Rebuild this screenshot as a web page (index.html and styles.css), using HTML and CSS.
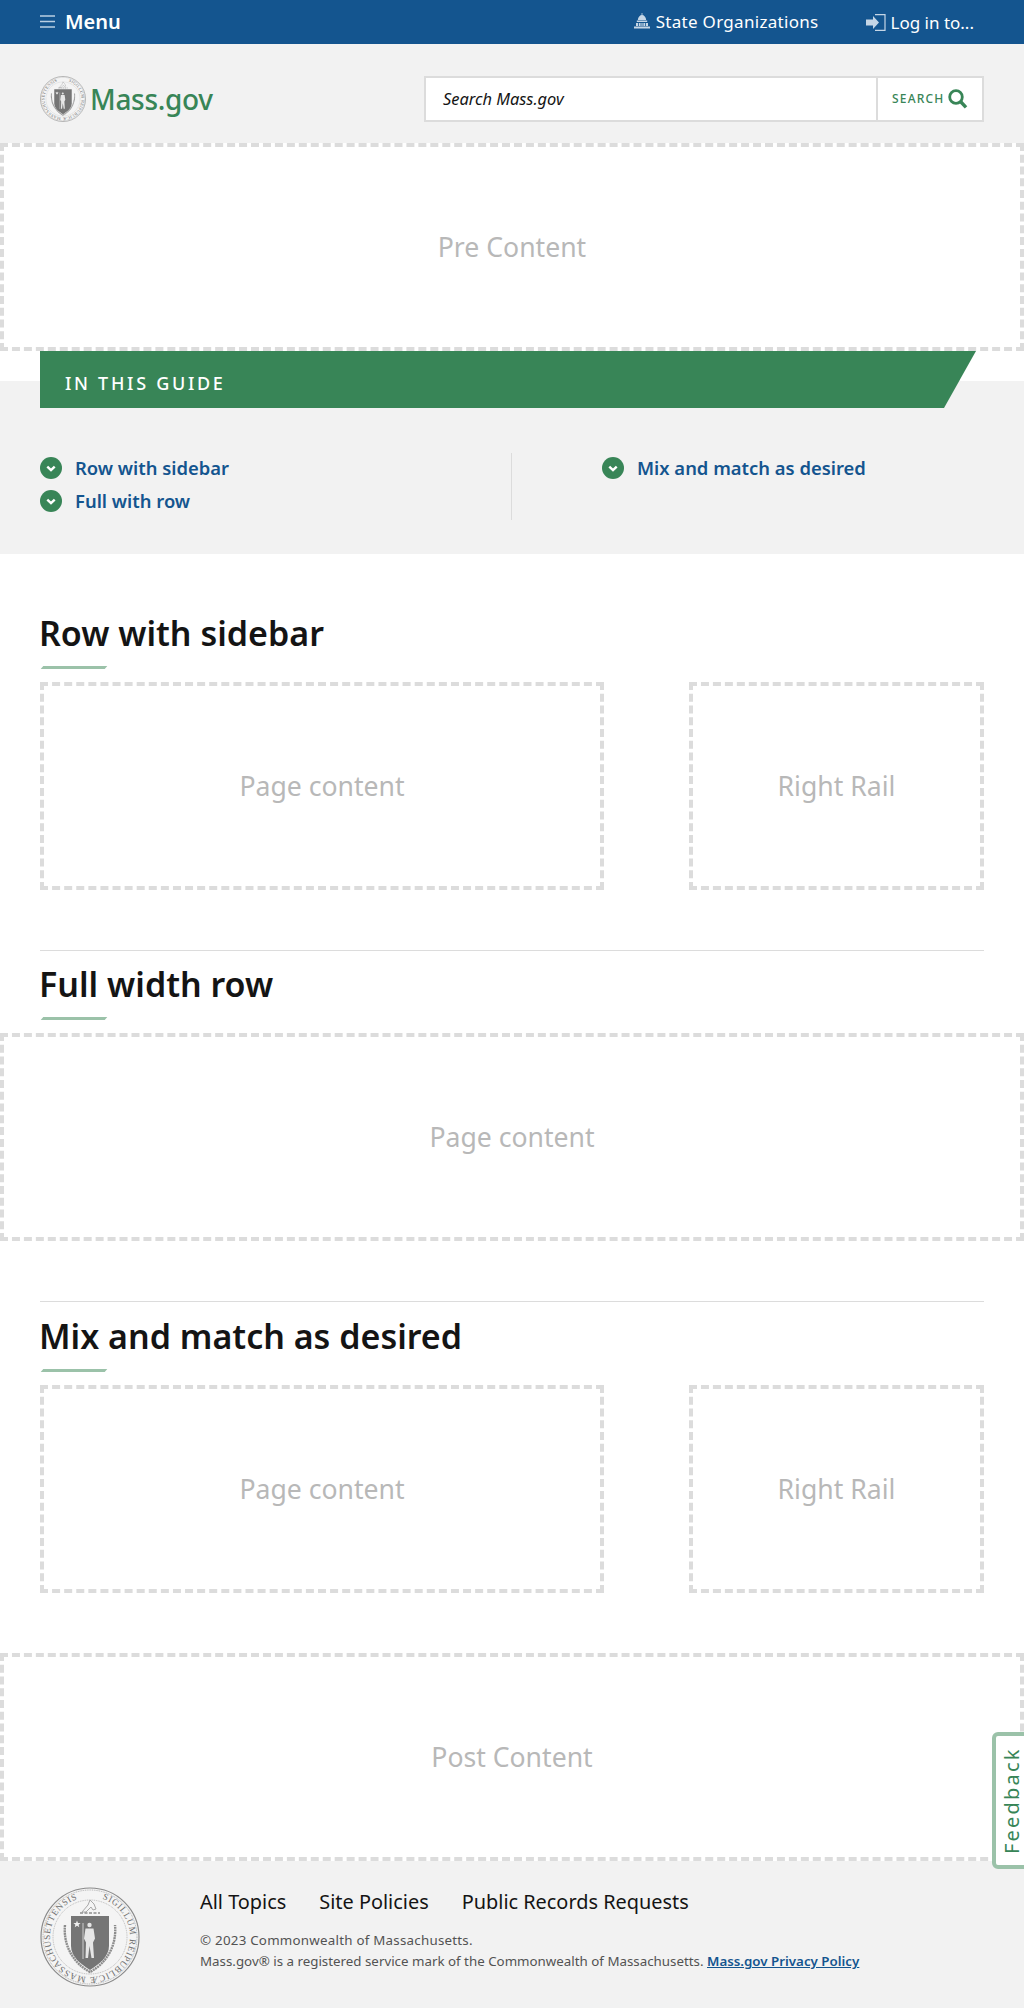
FILE: index.html
```html
<!DOCTYPE html>
<html lang="en">
<head>
<meta charset="utf-8">
<title>Mass.gov</title>
<link rel="stylesheet" href="styles.css">
</head>
<body>
<svg class="defs" width="0" height="0" aria-hidden="true">
  <defs>
    <symbol id="seal" viewBox="0 0 100 100">
      <circle cx="50" cy="50" r="49" fill="#f4f4f4" stroke="#8a8a8a" stroke-width="1.2"/>
      <circle cx="50" cy="50" r="47" fill="none" stroke="#a0a0a0" stroke-width=".8" stroke-dasharray="1 .8"/>
      <circle cx="50" cy="50" r="37" fill="none" stroke="#a5a5a5" stroke-width=".7" stroke-dasharray="1 .8"/>
      <path id="sealring" d="M50 10a40 40 0 1 1-.01 0" fill="none"/>
      <text class="seal-text"><textPath href="#sealring" startOffset="5%" textLength="225">SIGILLUM REIPUBLICÆ MASSACHUSETTENSIS</textPath></text>
      <path d="M31 29h38v30c0 11-10 18-19 24-9-6-19-13-19-24z" fill="#757575"/>
      <path d="M25 38c-2 20 8 38 25 47 17-9 27-27 25-47" fill="none" stroke="#8d8d8d" stroke-width="2.400" stroke-dasharray="2 .6"/>
      <path d="M42 25l6-7 2-5 4 4 2 5-3 1-2-3-5 5z" fill="none" stroke="#a8a8a8" stroke-width="1"/>
      <path d="M40 26h20" stroke="#8d8d8d" stroke-width="1.400" stroke-dasharray="3 1.500"/>
      <circle cx="49.500" cy="38" r="2.200" fill="#e6e6e6"/>
      <path d="M45.500 41.500h8l1.500 10-2 4 1 15.500h-2.500l-2-12-1.500 12h-2.500l.5-15.500-2-4z" fill="#e6e6e6"/>
      <path d="M43 36v36" stroke="#e6e6e6" stroke-width=".8"/>
      <path d="M37 33.500l1 2.500 2.600.100-2 1.600.700 2.500-2.300-1.400-2.300 1.400.700-2.500-2-1.600 2.600-.100z" fill="#eee"/>
    </symbol>
    <symbol id="chev" viewBox="0 0 22 22">
      <circle cx="11" cy="11" r="11" fill="#388557"/>
      <path d="M7.300 9.600 11 13.200l3.700-3.600" fill="none" stroke="#fff" stroke-width="2.400"/>
    </symbol>
  </defs>
</svg>

<div class="utility">
  <div class="menu-link">
    <svg class="burger" viewBox="0 0 15 13"><path d="M0 1h15M0 6.500h15M0 12h15" stroke="#b9cfe3" stroke-width="1.300"/></svg>
    <span>Menu</span>
  </div>
  <div class="utility-right">
    <div class="util-item">
      <svg class="capitol" viewBox="0 0 16 16"><path d="M3.800 7C4 4 6 2 8 2s4 2 4.200 5zM2.800 7.500h10.400v1.500H2.800zM0 13.500h16V15.500H0zM2 10h12v3H2z" fill="#c5d6e6"/><path d="M4.500 10v3M7 10v3M9 10v3M11.500 10v3" stroke="#14558f" stroke-width=".8"/><path d="M8 0v2" stroke="#c5d6e6" stroke-width=".8"/></svg>
      <span>State Organizations</span>
    </div>
    <div class="util-item login">
      <svg class="login-icon" viewBox="0 0 20 17"><path d="M0 5.500h7V2l6 6.500-6 6.500v-3.500H0z" fill="#c5d6e6"/><path d="M9 .7h10v15.600H9" fill="none" stroke="#c5d6e6" stroke-width="1.200"/></svg>
      <span>Log in to...</span>
    </div>
  </div>
</div>

<header class="site-header">
  <a class="logo">
    <svg class="logo-seal"><use href="#seal"/></svg>
    <span>Mass.gov</span>
  </a>
  <div class="search">
    <div class="search-input">Search Mass.gov</div>
    <div class="search-btn">
      <span>SEARCH</span>
      <svg class="search-icon" viewBox="0 0 20 20"><circle cx="8" cy="8" r="6.300" fill="none" stroke="#388557" stroke-width="2.800"/><path d="M12.500 12.500 18 18.300" stroke="#388557" stroke-width="3.400"/></svg>
    </div>
  </div>
</header>

<main>
  <div class="region full">Pre Content</div>

  <section class="toc">
    <div class="toc-banner">IN THIS GUIDE</div>
    <div class="toc-cols">
      <ul class="toc-col">
        <li><svg class="chev"><use href="#chev"/></svg><a>Row with sidebar</a></li>
        <li><svg class="chev"><use href="#chev"/></svg><a>Full with row</a></li>
      </ul>
      <ul class="toc-col toc-col-right">
        <li><svg class="chev"><use href="#chev"/></svg><a>Mix and match as desired</a></li>
      </ul>
    </div>
  </section>

  <section class="group first">
    <h2>Row with sidebar</h2>
    <div class="row">
      <div class="region main-col">Page content</div>
      <div class="region rail">Right Rail</div>
    </div>
  </section>

  <section class="group ruled">
    <h2>Full width row</h2>
  </section>
  <div class="region full">Page content</div>

  <section class="group ruled second">
    <h2>Mix and match as desired</h2>
    <div class="row">
      <div class="region main-col">Page content</div>
      <div class="region rail">Right Rail</div>
    </div>
  </section>

  <div class="region full post">Post Content</div>
</main>

<a class="feedback">Feedback</a>

<footer class="site-footer">
  <svg class="footer-seal"><use href="#seal"/></svg>
  <div class="footer-body">
    <nav class="footer-nav">
      <a>All Topics</a>
      <a>Site Policies</a>
      <a>Public Records Requests</a>
    </nav>
    <p class="legal legal-wide">© 2023 Commonwealth of Massachusetts.</p>
    <p class="legal">Mass.gov® is a registered service mark of the Commonwealth of Massachusetts. <a class="privacy">Mass.gov Privacy Policy</a></p>
  </div>
</footer>
</body>
</html>
```
FILE: styles.css
```css
* { box-sizing: border-box; }
html, body { margin: 0; padding: 0; }
body {
  position: relative;
  width: 1024px;
  height: 2008px;
  overflow: hidden;
  background: #fff;
  color: #141414;
  font-family: "Noto Sans", "Open Sans", sans-serif;
}
.defs { position: absolute; }
ul { list-style: none; margin: 0; padding: 0; }
p { margin: 0; }

.utility {
  height: 44px;
  background: #14558f;
  color: #fff;
  display: flex;
  justify-content: space-between;
  align-items: center;
  padding: 0 50px 2px 40px;
}
.menu-link { display: flex; align-items: center; gap: 10px; font-size: 20px; font-weight: 600; }
.burger { width: 15px; height: 13px; }
.utility-right { display: flex; align-items: center; gap: 47px; font-size: 17px; }
.util-item { display: flex; align-items: center; gap: 6px; letter-spacing: .3px; }
.capitol { width: 16px; height: 16px; }
.login { gap: 5px; padding-top: 2px; letter-spacing: 0; }
.login-icon { width: 20px; height: 17px; }

.site-header {
  height: 99px;
  background: #f2f2f2;
  display: flex;
  justify-content: space-between;
  align-items: center;
  padding: 10px 40px 0 40px;
}
.logo { display: flex; align-items: center; gap: 4px; color: #388557; font-size: 28px; font-weight: 500; letter-spacing: -.3px; }
.logo-seal { width: 46px; height: 46px; }
.search { display: flex; width: 560px; height: 46px; border: 2px solid #dcdcdc; background: #fff; }
.search-input { flex: 1; display: flex; align-items: center; padding-left: 17px; font-style: italic; font-size: 16.400px; color: #141414; }
.search-btn { width: 106px; border-left: 2px solid #dcdcdc; display: flex; align-items: center; gap: 3px; padding-left: 14px; color: #388557; font-size: 12px; font-weight: 500; letter-spacing: 1.200px; }
.search-icon { width: 20px; height: 20px; }

.region {
  display: flex;
  align-items: center;
  justify-content: center;
  height: 208px;
  border: 4px dashed #dcdcdc;
  background: #fff;
  color: #b8b8b8;
  font-size: 26.600px;
}
.full { width: 1024px; }

.toc { position: relative; background: #f2f2f2; height: 173px; margin-top: 30px; }
.toc-banner {
  position: absolute;
  top: -30px;
  left: 40px;
  width: 936px;
  height: 57px;
  padding: 6px 0 0 25px;
  display: flex;
  align-items: center;
  background: #388557;
  clip-path: polygon(0 0, 100% 0, calc(100% - 32px) 100%, 0 100%);
  color: #fff;
  font-size: 18px;
  font-weight: 500;
  letter-spacing: 2.700px;
}
.toc-cols { display: grid; grid-template-columns: 472px 472px; padding: 72px 40px 0; }
.toc-col { min-height: 67px; padding-top: 3px; border-right: 1px solid #dcdcdc; display: flex; flex-direction: column; gap: 11px; }
.toc-col-right { border-right: 0; padding-left: 90px; }
.toc-col li { display: flex; align-items: center; gap: 13px; height: 22px; color: #14558f; font-size: 18.400px; font-weight: 600; }
.chev { width: 22px; height: 22px; flex: none; margin-top: 2px; }

.group { padding: 0 40px; }
.group h2 { position: relative; margin: 0 0 13px -1px; font-size: 34px; line-height: 46px; font-weight: 600; color: #141414; padding-bottom: 13px; }
.group h2::after { content: ""; position: absolute; left: 3px; bottom: 0; width: 64px; height: 3px; background: #9bc2a9; transform: skewX(-40deg); }
.first { padding-top: 56px; }
.row { display: flex; justify-content: space-between; }
.main-col { width: 564px; }
.rail { width: 295px; }
.ruled { margin: 60px 40px 0; padding: 10px 0 0; border-top: 1px solid #dcdcdc; }
.second { padding-top: 11px; }
.post { margin-top: 60px; }

.feedback {
  position: absolute;
  left: 992px;
  top: 1732px;
  width: 38px;
  height: 137px;
  display: flex;
  align-items: center;
  justify-content: center;
  writing-mode: vertical-rl;
  transform: rotate(180deg);
  border: 4px solid #9bc2a9;
  border-radius: 0 6px 6px 0;
  background: #fff;
  color: #388557;
  font-size: 20px;
  letter-spacing: 2.200px;
}
.seal-text { font-family: "Liberation Serif", serif; font-size: 9px; fill: #6d6d6d; }

.site-footer {
  height: 147px;
  background: #f2f2f2;
  display: flex;
  padding: 26px 0 0 40px;
}
.footer-seal { width: 100px; height: 100px; flex: none; }
.footer-body { margin-left: 60px; }
.footer-nav { display: flex; gap: 33px; margin: -1px 0 12px; font-size: 19.900px; color: #141414; line-height: 32px; }
.legal { font-size: 13.340px; line-height: 21px; color: #535353; }
.legal-wide { letter-spacing: .24px; }
.privacy { color: #14558f; font-weight: 600; text-decoration: underline; }
```
